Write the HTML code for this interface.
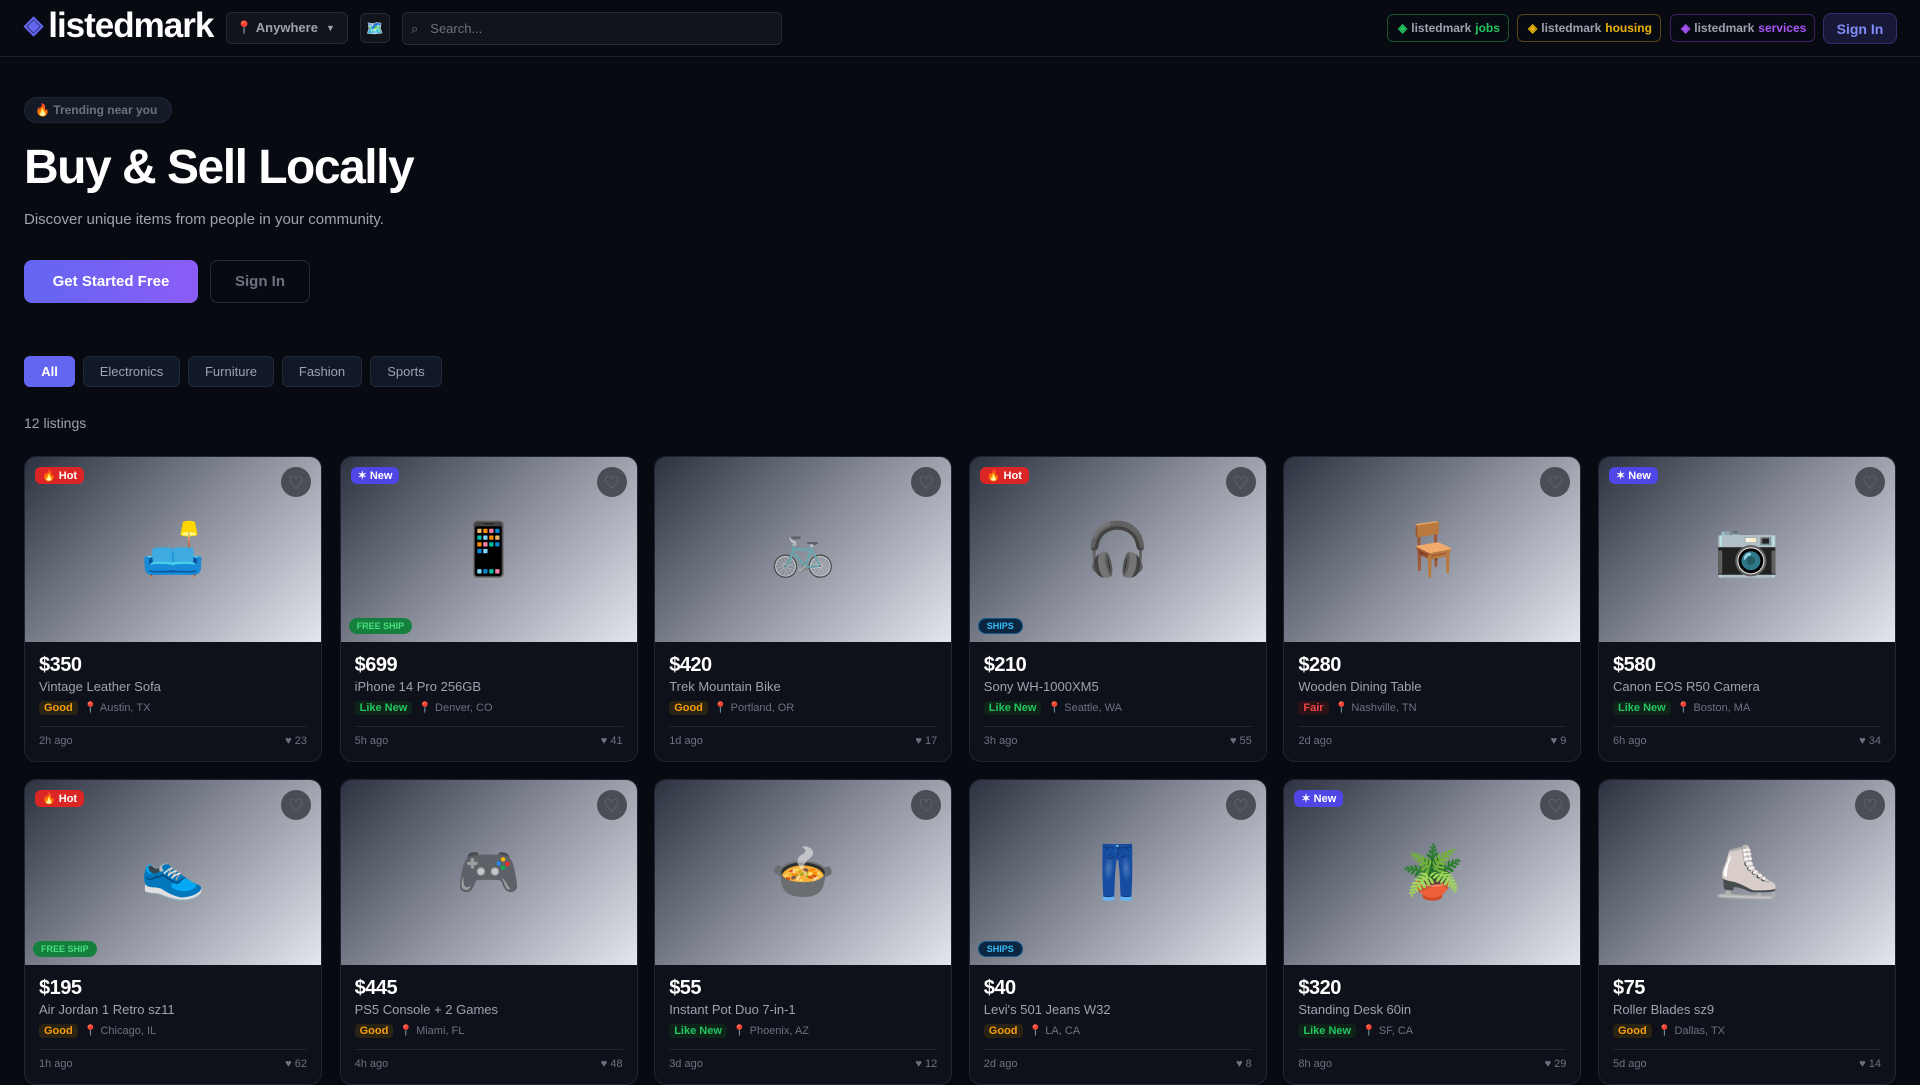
<!DOCTYPE html>
<html><head><meta charset="utf-8"><style>
*{box-sizing:border-box;margin:0;padding:0}
body{width:1920px;height:1080px;overflow:hidden;background:#080a12;font-family:"Liberation Sans","Noto Sans CJK JP",sans-serif;color:#e5e7eb;position:relative}
.hdr{position:absolute;left:0;top:0;width:1920px;height:57px;border-bottom:1px solid #1c1f29}
.abs{position:absolute}
.logo{left:24px;top:6px;font-size:35px;font-weight:bold;color:#fff;letter-spacing:-1px}
.logo span{color:#6366f1;font-size:25px;margin-right:6px;vertical-align:4px}
.box{border:1px solid #272a33;background:#12141b;border-radius:6px}
.pill{position:absolute;top:14px;height:28px;border-radius:6px;font-size:12px;font-weight:bold;color:#9ca3af;display:flex;align-items:center;padding:0 10px;gap:4px}
.btn{position:absolute;display:flex;align-items:center;justify-content:center;font-weight:bold;border-radius:8px}
.f{position:absolute;top:356px;height:31px;border-radius:6px;background:#111827;border:1px solid #1f2937;color:#9ca3af;font-size:13px;display:flex;align-items:center;justify-content:center}
.card{position:absolute;width:298px;height:306px;border:1px solid #1f2533;border-radius:12px;background:#0e1119;overflow:hidden}
.img{height:185px;background:linear-gradient(135deg,#2d3240 0%,#8a8f9b 50%,#e2e6ee 100%);position:relative;display:flex;align-items:center;justify-content:center;font-size:52px}
.tag{position:absolute;left:10px;top:10px;height:17px;padding:0 7px;border-radius:6px;font-size:11px;font-weight:bold;color:#fff;display:flex;align-items:center}
.heart{position:absolute;right:10px;top:10px;width:30px;height:30px;border-radius:50%;background:rgba(60,62,68,.85);color:#6b6e75;font-size:15px;display:flex;align-items:center;justify-content:center}
.ship{position:absolute;left:8px;bottom:8px;height:16px;padding:0 8px;border-radius:8px;font-size:9px;font-weight:bold;display:flex;align-items:center}
.fs{background:#15803d;color:#4ade80}
.sh{background:#0c2540;color:#38bdf8;border:1px solid #0e5a8a}
.body{padding:10px 14px 0}
.price{font-size:20px;font-weight:bold;color:#fff;letter-spacing:-.5px;height:24px;margin-top:2px}
.title{font-size:13px;color:#9ca3af;margin-top:1px}
.meta{display:flex;align-items:center;gap:6px;margin-top:6px;font-size:11px;color:#6b7280;height:15px}
.c{padding:1px 5px;border-radius:4px;font-weight:bold;font-size:11px}
.good{background:#2a2212;color:#f59e0b}.ln{background:#0f2419;color:#22c55e}.fair{background:#2a1216;color:#ef4444}
.foot{border-top:1px solid #1f2533;margin-top:11px;padding-top:8px;display:flex;justify-content:space-between;font-size:11px;color:#6b7280}
</style></head><body>
<div class="hdr"></div>
<div class="abs logo"><span>◈</span>listedmark</div>
<div class="abs box" style="left:226px;top:12px;width:122px;height:32px;display:flex;align-items:center;padding-left:9px;font-size:13px;font-weight:bold;color:#9ca3af">📍&nbsp;Anywhere <span style="font-size:9px;margin-left:8px">▼</span></div>
<div class="abs box" style="left:360px;top:13px;width:30px;height:30px;display:flex;align-items:center;justify-content:center;font-size:14px">🗺️</div>
<div class="abs box" style="left:402px;top:12px;width:380px;height:33px;display:flex;align-items:center;padding-left:8px;font-size:13px;color:#6b7280"><span style="font-size:13px;margin-right:12px">⌕</span>Search...</div>
<div class="pill" style="left:1387px;width:122px;border:1px solid #14532d"><span style="color:#22c55e">◈</span>listedmark <span style="color:#22c55e">jobs</span></div>
<div class="pill" style="left:1517px;width:144px;border:1px solid #5c4410"><span style="color:#eab308">◈</span>listedmark <span style="color:#eab308">housing</span></div>
<div class="pill" style="left:1670px;width:145px;border:1px solid #3b1f63"><span style="color:#a855f7">◈</span>listedmark <span style="color:#a855f7">services</span></div>
<div class="btn" style="left:1823px;top:13px;width:74px;height:31px;background:#171936;border:1px solid #2e3170;color:#818cf8;font-size:14px">Sign In</div>

<div class="abs" style="left:24px;top:97px;height:26px;width:148px;border-radius:13px;background:#141a26;border:1px solid #1f2737;font-size:12px;font-weight:bold;color:#6b7280;display:flex;align-items:center;padding-left:10px">🔥&nbsp;Trending near you</div>
<div class="abs" style="left:24px;top:140px;font-size:48px;font-weight:bold;color:#fff;letter-spacing:-1.5px">Buy &amp; Sell Locally</div>
<div class="abs" style="left:24px;top:211px;font-size:15px;color:#9ca3af">Discover unique items from people in your community.</div>
<div class="btn" style="left:24px;top:260px;width:174px;height:43px;background:linear-gradient(90deg,#6366f1,#8b5cf6);color:#fff;font-size:15px">Get Started Free</div>
<div class="btn" style="left:210px;top:260px;width:100px;height:43px;border:1px solid #262a33;color:#6b7280;font-size:15px">Sign In</div>

<div class="f" style="left:24px;width:51px;background:#6366f1;border-color:#6366f1;color:#fff;font-weight:bold">All</div>
<div class="f" style="left:83px;width:97px">Electronics</div>
<div class="f" style="left:188px;width:86px">Furniture</div>
<div class="f" style="left:282px;width:80px">Fashion</div>
<div class="f" style="left:370px;width:72px">Sports</div>
<div class="abs" style="left:24px;top:415px;font-size:14px;color:#9ca3af">12 listings</div>

<div class="card" style="left:24px;top:456px"><div class="img">🛋️<div class="tag" style="background:#dc2626">🔥 Hot</div><div class="heart">♡</div></div><div class="body"><div class="price">$350</div><div class="title">Vintage Leather Sofa</div><div class="meta"><span class="c good">Good</span>📍 Austin, TX</div><div class="foot"><span>2h ago</span><span>♥ 23</span></div></div></div>
<div class="card" style="left:339.6px;top:456px"><div class="img">📱<div class="tag" style="background:#4f46e5">✶ New</div><div class="heart">♡</div><div class="ship fs">FREE SHIP</div></div><div class="body"><div class="price">$699</div><div class="title">iPhone 14 Pro 256GB</div><div class="meta"><span class="c ln">Like New</span>📍 Denver, CO</div><div class="foot"><span>5h ago</span><span>♥ 41</span></div></div></div>
<div class="card" style="left:654.2px;top:456px"><div class="img">🚲<div class="heart">♡</div></div><div class="body"><div class="price">$420</div><div class="title">Trek Mountain Bike</div><div class="meta"><span class="c good">Good</span>📍 Portland, OR</div><div class="foot"><span>1d ago</span><span>♥ 17</span></div></div></div>
<div class="card" style="left:968.8px;top:456px"><div class="img">🎧<div class="tag" style="background:#dc2626">🔥 Hot</div><div class="heart">♡</div><div class="ship sh">SHIPS</div></div><div class="body"><div class="price">$210</div><div class="title">Sony WH-1000XM5</div><div class="meta"><span class="c ln">Like New</span>📍 Seattle, WA</div><div class="foot"><span>3h ago</span><span>♥ 55</span></div></div></div>
<div class="card" style="left:1283.4px;top:456px"><div class="img">🪑<div class="heart">♡</div></div><div class="body"><div class="price">$280</div><div class="title">Wooden Dining Table</div><div class="meta"><span class="c fair">Fair</span>📍 Nashville, TN</div><div class="foot"><span>2d ago</span><span>♥ 9</span></div></div></div>
<div class="card" style="left:1598px;top:456px"><div class="img">📷<div class="tag" style="background:#4f46e5">✶ New</div><div class="heart">♡</div></div><div class="body"><div class="price">$580</div><div class="title">Canon EOS R50 Camera</div><div class="meta"><span class="c ln">Like New</span>📍 Boston, MA</div><div class="foot"><span>6h ago</span><span>♥ 34</span></div></div></div>

<div class="card" style="left:24px;top:779px"><div class="img">👟<div class="tag" style="background:#dc2626">🔥 Hot</div><div class="heart">♡</div><div class="ship fs">FREE SHIP</div></div><div class="body"><div class="price">$195</div><div class="title">Air Jordan 1 Retro sz11</div><div class="meta"><span class="c good">Good</span>📍 Chicago, IL</div><div class="foot"><span>1h ago</span><span>♥ 62</span></div></div></div>
<div class="card" style="left:339.6px;top:779px"><div class="img">🎮<div class="heart">♡</div></div><div class="body"><div class="price">$445</div><div class="title">PS5 Console + 2 Games</div><div class="meta"><span class="c good">Good</span>📍 Miami, FL</div><div class="foot"><span>4h ago</span><span>♥ 48</span></div></div></div>
<div class="card" style="left:654.2px;top:779px"><div class="img">🍲<div class="heart">♡</div></div><div class="body"><div class="price">$55</div><div class="title">Instant Pot Duo 7-in-1</div><div class="meta"><span class="c ln">Like New</span>📍 Phoenix, AZ</div><div class="foot"><span>3d ago</span><span>♥ 12</span></div></div></div>
<div class="card" style="left:968.8px;top:779px"><div class="img">👖<div class="heart">♡</div><div class="ship sh">SHIPS</div></div><div class="body"><div class="price">$40</div><div class="title">Levi's 501 Jeans W32</div><div class="meta"><span class="c good">Good</span>📍 LA, CA</div><div class="foot"><span>2d ago</span><span>♥ 8</span></div></div></div>
<div class="card" style="left:1283.4px;top:779px"><div class="img">🪴<div class="tag" style="background:#4f46e5">✶ New</div><div class="heart">♡</div></div><div class="body"><div class="price">$320</div><div class="title">Standing Desk 60in</div><div class="meta"><span class="c ln">Like New</span>📍 SF, CA</div><div class="foot"><span>8h ago</span><span>♥ 29</span></div></div></div>
<div class="card" style="left:1598px;top:779px"><div class="img">⛸️<div class="heart">♡</div></div><div class="body"><div class="price">$75</div><div class="title">Roller Blades sz9</div><div class="meta"><span class="c good">Good</span>📍 Dallas, TX</div><div class="foot"><span>5d ago</span><span>♥ 14</span></div></div></div>
</body></html>
